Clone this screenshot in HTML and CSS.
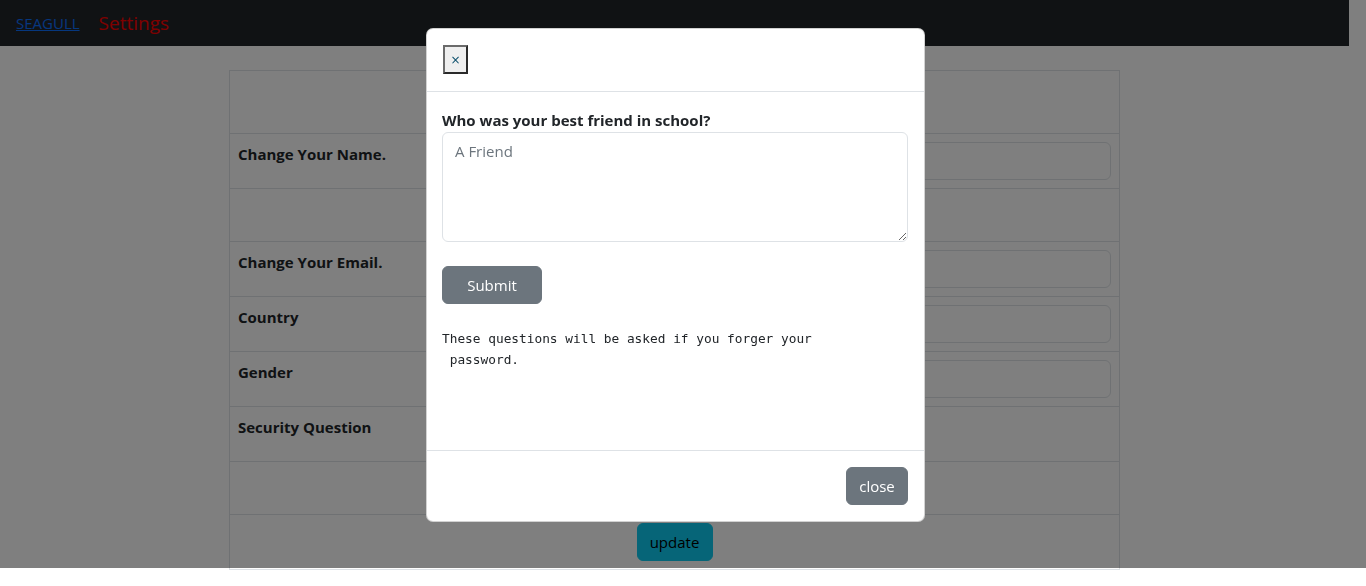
FILE: index.html
```html
<!DOCTYPE html>
<html lang="en">
<head>
<meta charset="utf-8">
<title>Settings</title>
<link rel="stylesheet" href="styles.css">
</head>
<body>
<div class="page">
  <nav class="navbar">
    <a class="brand" href="#">SEAGULL</a>
    <span class="nav-title">Settings</span>
  </nav>

  <div class="settings">
    <div class="row row-head"></div>
    <div class="row">
      <div class="cell label">Change Your Name.</div>
      <div class="cell"><input class="form-control" type="text"></div>
    </div>
    <div class="row row-gap"></div>
    <div class="row">
      <div class="cell label">Change Your Email.</div>
      <div class="cell"><input class="form-control" type="text"></div>
    </div>
    <div class="row">
      <div class="cell label">Country</div>
      <div class="cell"><input class="form-control" type="text"></div>
    </div>
    <div class="row">
      <div class="cell label">Gender</div>
      <div class="cell"><input class="form-control" type="text"></div>
    </div>
    <div class="row">
      <div class="cell label">Security Question</div>
      <div class="cell"></div>
    </div>
    <div class="row row-gap"></div>
    <div class="row row-center">
      <button class="btn btn-info" type="button">update</button>
    </div>
  </div>
</div>

<div class="backdrop"></div>

<div class="modal">
  <div class="modal-dialog">
    <div class="modal-header">
      <button class="x-btn" type="button">×</button>
    </div>
    <div class="modal-body">
      <label class="q-label">Who was your best friend in school?</label>
      <textarea class="q-input" placeholder="A Friend"></textarea>
      <button class="btn btn-secondary btn-submit" type="button">Submit</button>
      <pre class="note">These questions will be asked if you forger your
 password.</pre>
    </div>
    <div class="modal-footer">
      <button class="btn btn-secondary" type="button">close</button>
    </div>
  </div>
</div>
</body>
</html>
```

FILE: styles.css
```css
* { box-sizing: border-box; }

html, body {
  margin: 0;
  padding: 0;
  overflow: hidden;
  background: #fff;
}

body {
  font-family: "Open Sans", "Noto Sans", sans-serif;
  font-size: 15px;
  line-height: 24px;
  color: #212529;
}

.page {
  width: 1349px;
}

.navbar {
  height: 46px;
  background: #212529;
  display: flex;
  align-items: center;
  padding: 0 16px;
  gap: 19px;
}

.brand {
  color: #0d6efd;
  text-decoration: underline;
  font-size: 15px;
}

.nav-title {
  color: #ff0000;
  font-size: 19px;
}

.settings {
  width: 891px;
  margin: 24px auto 0;
  border: 1px solid #dee2e6;
  border-bottom: 0;
}

.row {
  display: grid;
  grid-template-columns: 1fr 1fr;
  border-bottom: 1px solid #dee2e6;
  height: 55px;
}

.row-head { height: 63px; }
.row-gap { height: 53px; }

.cell {
  padding: 8px;
}

.label {
  font-weight: 700;
}

.row-center {
  display: flex;
  justify-content: center;
  align-items: flex-start;
  padding-top: 8px;
}

.form-control {
  display: block;
  width: 100%;
  height: 38px;
  border: 1px solid #dee2e6;
  border-radius: 6px;
  background: #fff;
  font: inherit;
}

.btn {
  font-family: inherit;
  font-size: 15px;
  line-height: 24px;
  height: 38px;
  padding: 6px 12px;
  border: 1px solid transparent;
  border-radius: 6px;
  cursor: pointer;
}

.btn-info {
  background: #0dcaf0;
  border-color: #0dcaf0;
  color: #000;
  width: 76px;
}

.btn-secondary {
  background: #6c757d;
  border-color: #6c757d;
  color: #fff;
}

.backdrop {
  position: fixed;
  top: 0;
  left: 0;
  width: 1366px;
  height: 568px;
  background: rgba(0, 0, 0, 0.5);
}

.modal {
  position: fixed;
  top: 0;
  left: 0;
  width: 1351px;
}

.modal-dialog {
  width: 499px;
  margin: 28px auto 0;
  background: #fff;
  border: 1px solid rgba(0, 0, 0, 0.175);
  border-radius: 7px;
  display: flex;
  flex-direction: column;
}

.modal-header {
  padding: 16px 16px;
  border-bottom: 1px solid #dee2e6;
  display: flex;
  height: 63px;
}

.x-btn {
  width: 25px;
  height: 29px;
  padding: 0;
  background: #efefef;
  border: 2px solid;
  border-color: #6b6b6b #2a2a2a #2a2a2a #6b6b6b;
  font-family: "DejaVu Sans", sans-serif;
  font-size: 12px;
  line-height: 1;
  color: #0b4f6c;
}

.modal-body {
  padding: 16px 16px 16px 15px;
  display: flex;
  flex-direction: column;
  align-items: flex-start;
  height: 358px;
}

.q-label {
  font-weight: 700;
  display: block;
}

.q-input {
  display: block;
  width: 466px;
  height: 110px;
  border: 1px solid #dee2e6;
  border-radius: 6px;
  padding: 6px 12px;
  font-family: inherit;
  font-size: 15px;
  line-height: 24px;
  color: #212529;
  resize: vertical;
}

.q-input::placeholder {
  color: #6c757d;
}

.btn-submit {
  width: 100px;
  margin-top: 24px;
}

.note {
  font-family: "DejaVu Sans Mono", "Liberation Mono", monospace;
  font-size: 12.8px;
  line-height: 21px;
  margin: 24px 0 0;
  color: #212529;
}

.modal-footer {
  border-top: 1px solid #dee2e6;
  padding: 12px 12px 12px 12px;
  display: flex;
  justify-content: flex-end;
}

.modal-footer .btn {
  margin: 4px;
  width: 62px;
}
```
